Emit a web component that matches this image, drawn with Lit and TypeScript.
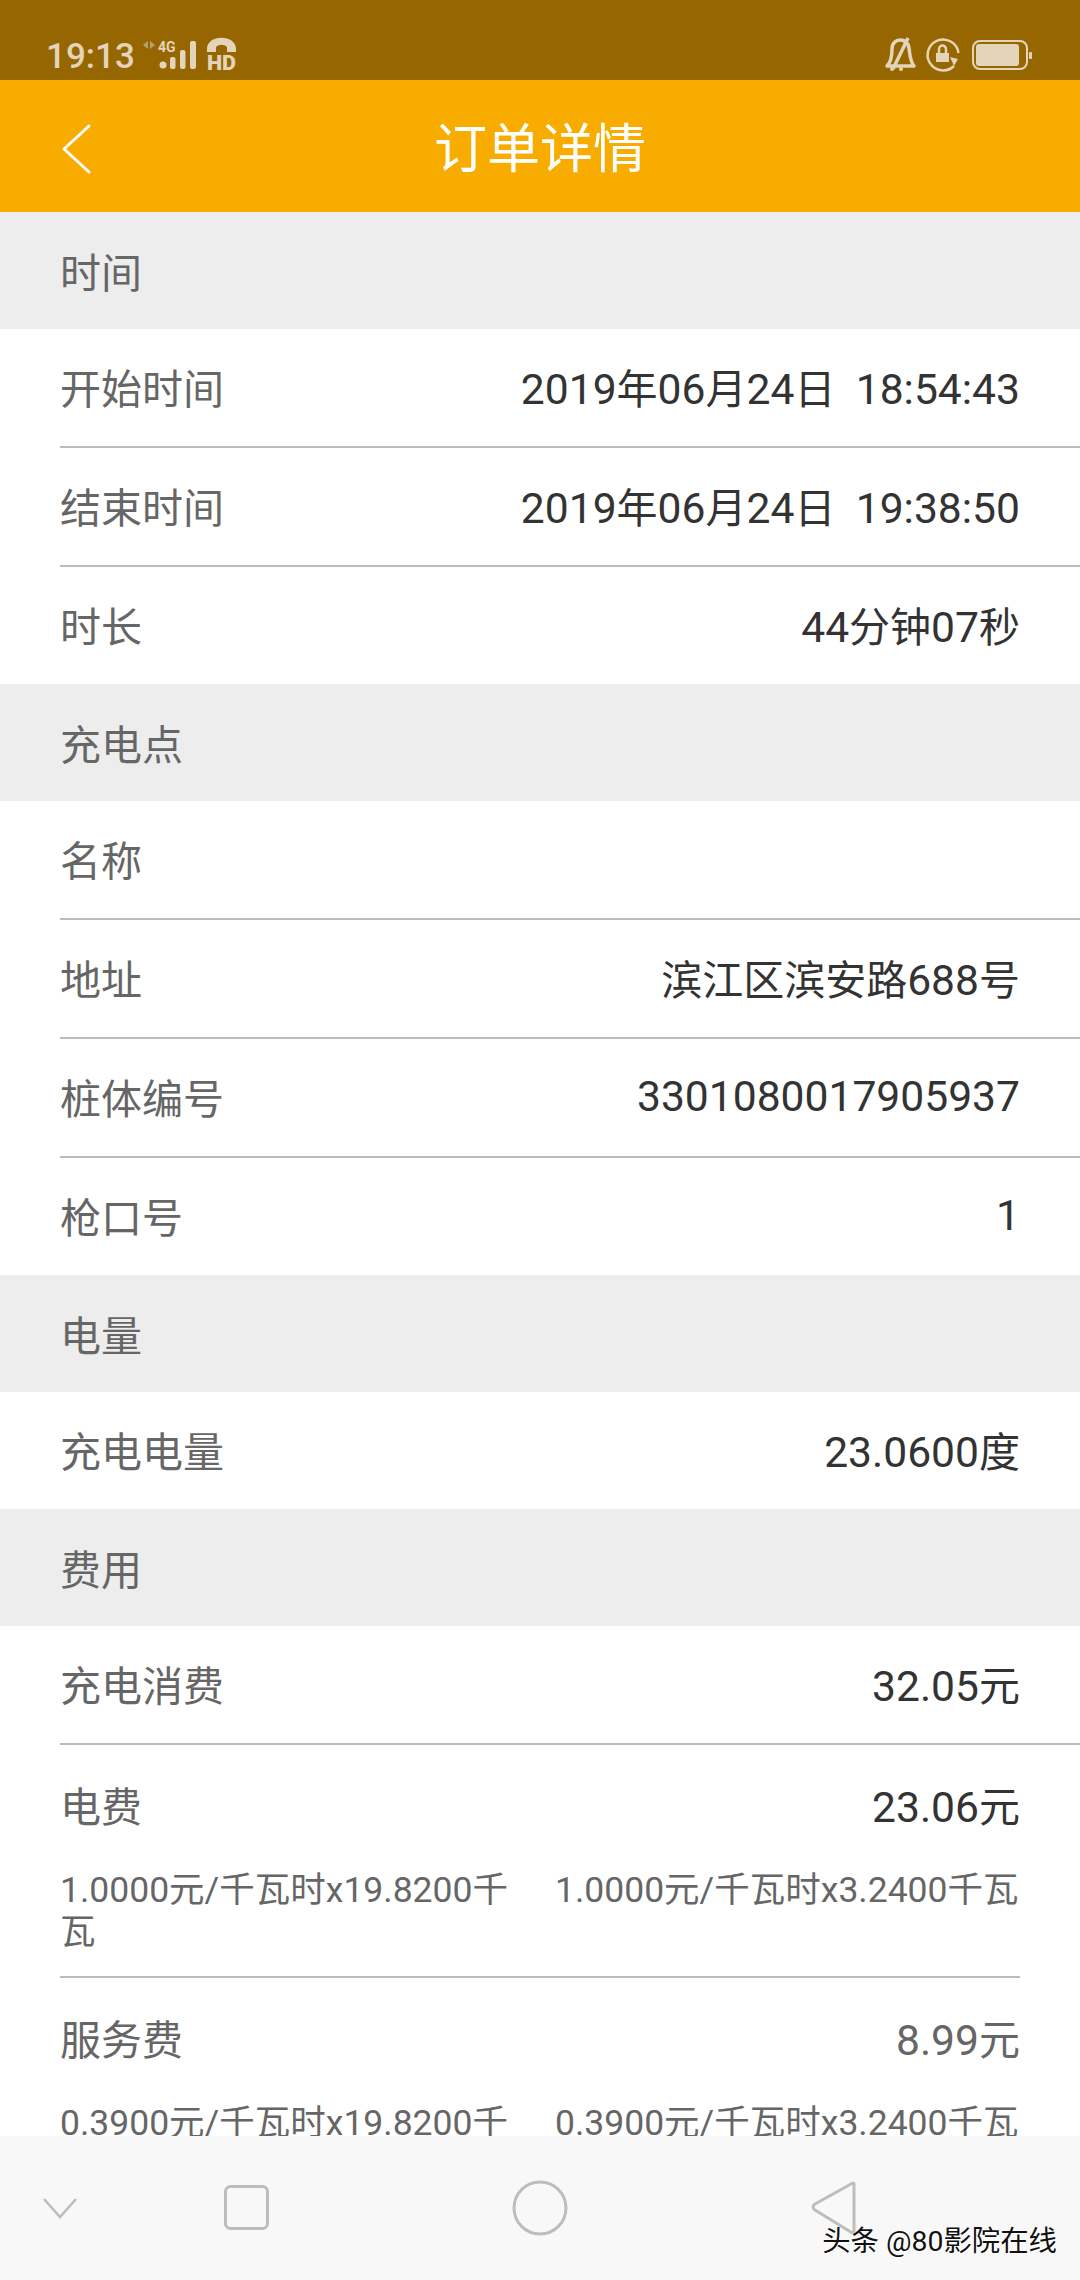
import { LitElement, html, css } from "lit";
import { customElement } from "lit/decorators.js";

type Row = { l: string; v?: string; end?: boolean };
const blocks: { t: string; rows: Row[] }[] = [
  { t: "时间", rows: [
    { l: "开始时间", v: "2019年06月24日  18:54:43" },
    { l: "结束时间", v: "2019年06月24日  19:38:50" },
    { l: "时长", v: "44分钟07秒", end: true },
  ]},
  { t: "充电点", rows: [
    { l: "名称" },
    { l: "地址", v: "滨江区滨安路688号" },
    { l: "桩体编号", v: "3301080017905937" },
    { l: "枪口号", v: "1", end: true },
  ]},
  { t: "电量", rows: [{ l: "充电电量", v: "23.0600度", end: true }] },
];

const digits = (v: string) =>
  v.split(/([0-9.:]+)/).map((p, i) => (i % 2 ? html`<span class="d">${p}</span>` : p));

@customElement("app-root")
export class AppRoot extends LitElement {
  static styles = css`
    :host { display: block; width: 1080px; height: 2280px; font-family: Roboto, "Noto Sans CJK SC", sans-serif; background: #fff; position: relative; overflow: hidden; }
    .page { display: flex; flex-direction: column; height: 2280px; }
    .status { height: 80px; flex: none; background: #966700; color: #e3d4ba; display: flex; align-items: flex-end; padding: 0 46px 9px 46px; box-sizing: border-box; justify-content: space-between; }
    .status .left, .status .right { display: flex; align-items: flex-end; }
    .status svg { display: block; margin-bottom: -4px; }
    .status .left svg { margin-left: 5px; }
    .time { font-size: 35px; font-weight: 500; line-height: 36px; margin-bottom: -4px; }
    .header { height: 132px; flex: none; background: #f9ac00; display: flex; align-items: center; justify-content: center; position: relative; color: #fff; font-size: 53px; padding-bottom: 2px; box-sizing: border-box; }
    .back { position: absolute; left: 60px; top: 40px; }
    .content { flex: 1; min-height: 0; overflow: hidden; }
    .sec { height: 117px; box-sizing: border-box; padding-bottom: 1px; background: #ededed; color: #666; font-size: 41px; display: flex; align-items: center; padding-left: 60px; }
    .row { height: 117px; box-sizing: border-box; display: flex; align-items: center; justify-content: space-between; padding: 0 60px 3px; font-size: 41px; color: #666; }
    .val { color: #333; white-space: pre; }
    .val.muted { color: #666; }
    .d { font-size: 42.6px; }
    .line { height: 2px; margin-left: 60px; background: #bcbcbc; }
    .line.short { margin-right: 60px; }
    .row.fee { height: 120px; }
    .subs { display: flex; gap: 30px; padding: 4px 60px 0; font-size: 35.5px; line-height: 42px; color: #666; height: 111px; box-sizing: border-box; }
    .subs div { flex: 1 1 0; min-width: 0; }
    .nav { height: 144px; flex: none; background: #f8f8f8; }
    .nav svg { display: block; }
    .mark { position: absolute; right: 23px; top: 2224px; font-size: 28.4px; color: #111; line-height: 36px; text-shadow: 1px 1px 0 #fff, -1px 0 0 #fff; }
  `;

  private rows(rows: Row[]) {
    return rows.map(r => html`
      <div class="row"><span>${r.l}</span><span class="val">${digits(r.v ?? "")}</span></div>
      ${r.end ? "" : html`<div class="line"></div>`}`);
  }

  render() {
    return html`<div class="page">
      <div class="status">
        <div class="left">
          <span class="time">19:13</span>
          <svg width="100" height="42" viewBox="0 0 100 42">
            <path d="M8 8 L3 12 L8 16Z M10 8 L15 12 L10 16Z" fill="#b8a06e"/>
            <text x="18" y="19" font-size="14" font-weight="700" font-family="Roboto" fill="#e3d4ba">4G</text>
            <circle cx="23" cy="32" r="3.5" fill="#e3d4ba"/>
            <rect x="30" y="24" width="5.5" height="12" rx="2" fill="#e3d4ba"/>
            <rect x="40" y="17" width="5.5" height="19" rx="2" fill="#e3d4ba"/>
            <rect x="50" y="8" width="6" height="28" rx="2" fill="#e3d4ba"/>
            <path d="M67 16 C67 1 96 1 96 16 L96 19 L87 19 L87 14 C84 11 79 11 76 14 L76 19 L67 19Z" fill="#e3d4ba"/>
            <text x="67" y="37" font-size="21" font-weight="900" font-family="Roboto" fill="#e3d4ba" textLength="29" lengthAdjust="spacingAndGlyphs">HD</text>
          </svg>
        </div>
        <div class="right">
          <svg width="150" height="42" viewBox="0 0 150 42">
            <path d="M3 33 H30 C26 28 26 22 25 15 C24 9 20 7 16 7 C12 7 8 10 8 16 C8 24 7 29 3 33Z" fill="none" stroke="#e3d4ba" stroke-width="3.5" stroke-linejoin="round"/>
            <path d="M24 5 L9 36" stroke="#e3d4ba" stroke-width="3.5"/>
            <circle cx="8" cy="36" r="2" fill="#e3d4ba"/><circle cx="17" cy="36" r="2" fill="#e3d4ba"/>
            <path d="M70 33 A15.5 15.5 0 1 1 74.5 20" fill="none" stroke="#e3d4ba" stroke-width="2.5"/>
            <path d="M66 24 L74 26 L70 33Z" fill="#e3d4ba"/>
            <rect x="52" y="20" width="13" height="9" fill="#e3d4ba"/>
            <path d="M55 20 V16 a3.5 3.5 0 0 1 7 0 V20" fill="none" stroke="#e3d4ba" stroke-width="2.5"/>
            <rect x="89" y="8" width="54" height="28" rx="7" fill="none" stroke="#e3d4ba" stroke-width="2"/>
            <rect x="92" y="11" width="43" height="22" rx="3" fill="#e3d4ba"/>
            <rect x="145" y="19" width="3" height="7" rx="1" fill="#e3d4ba"/>
          </svg>
        </div>
      </div>
      <div class="header">
        <svg class="back" width="34" height="58" viewBox="0 0 34 58"><path d="M29 6 L4 29 L29 52" fill="none" stroke="#fff" stroke-width="3" stroke-linecap="round" stroke-linejoin="round"/></svg>
        订单详情
      </div>
      <div class="content">
        ${blocks.map(b => html`<div class="sec">${b.t}</div>${this.rows(b.rows)}`)}
        <div class="sec">费用</div>
        <div class="row"><span>充电消费</span><span class="val">${digits("32.05元")}</span></div>
        <div class="line"></div>
        <div class="row fee"><span>电费</span><span class="val">${digits("23.06元")}</span></div>
        <div class="subs"><div>1.0000元/千瓦时x19.8200千瓦</div><div>1.0000元/千瓦时x3.2400千瓦</div></div>
        <div class="line short"></div>
        <div class="row fee"><span>服务费</span><span class="val muted">${digits("8.99元")}</span></div>
        <div class="subs"><div>0.3900元/千瓦时x19.8200千瓦</div><div>0.3900元/千瓦时x3.2400千瓦</div></div>
      </div>
      <div class="nav">
        <svg width="1080" height="144" viewBox="0 0 1080 144">
          <path d="M44 63 L60 81 L76 63" fill="none" stroke="#bdbdbd" stroke-width="2.5"/>
          <rect x="225.5" y="50.5" width="42" height="42" rx="5" fill="none" stroke="#bdbdbd" stroke-width="3"/>
          <circle cx="540" cy="72" r="26" fill="none" stroke="#bdbdbd" stroke-width="3"/>
          <path d="M854 48 Q854 46 851 48 L815 68 Q811 71 815 74 L854 98 Z" fill="none" stroke="#bdbdbd" stroke-width="3" stroke-linejoin="round"/>
        </svg>
      </div>
    </div>
    <div class="mark">头条 @80影院在线</div>`;
  }
}
